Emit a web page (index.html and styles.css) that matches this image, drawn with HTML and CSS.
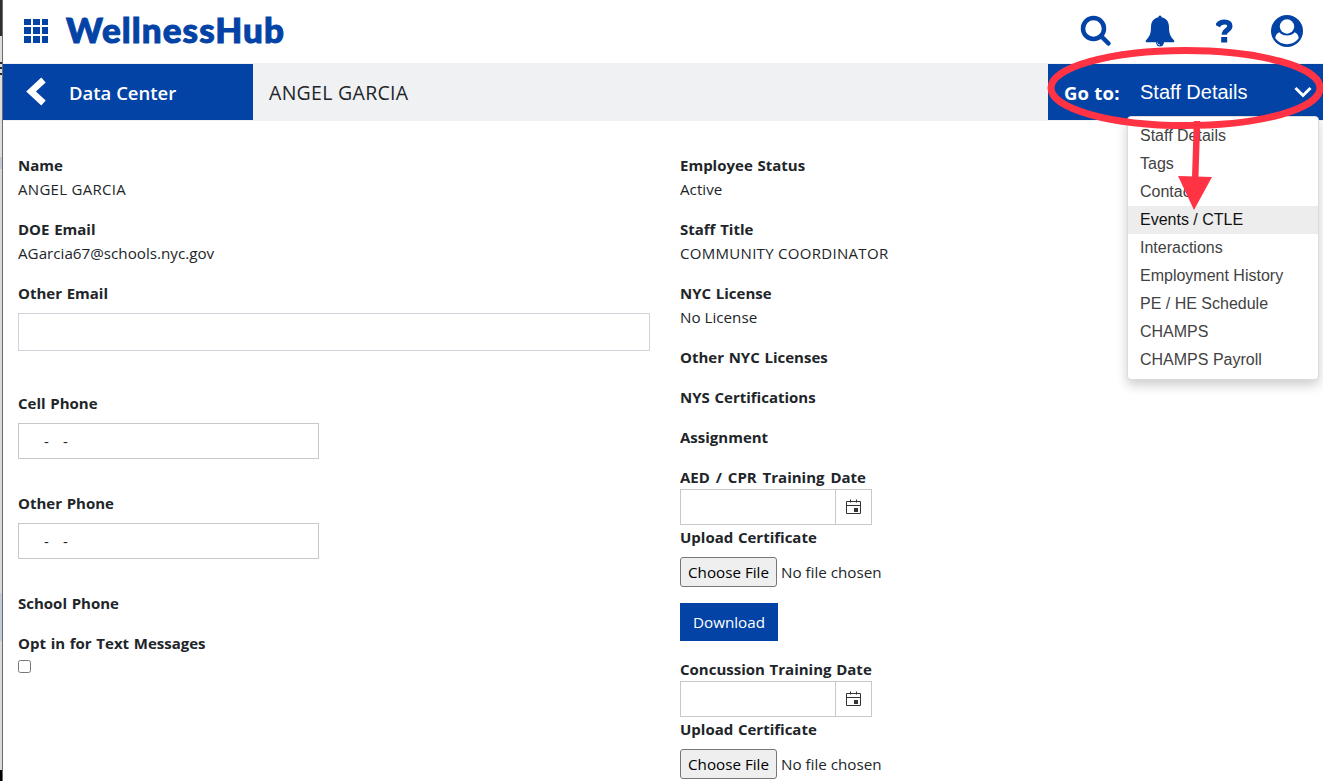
FILE: index.html
```html
<!DOCTYPE html>
<html lang="en">
<head>
    <meta charset="UTF-8">
    <meta name="viewport" content="width=device-width, initial-scale=1.0">
    <title>WellnessHub - Staff Details</title>
    <link rel="stylesheet" href="styles.css">
</head>
<body>
    <div class="edge"></div>

    <div class="page">
        <header class="topbar">
            <div class="app-grid">
                <i></i><i></i><i></i><i></i><i></i><i></i><i></i><i></i><i></i>
            </div>
            <div class="logo">WellnessHub</div>
            <div class="top-icons">
                <svg width="32" height="32" viewBox="0 0 32 32">
                    <circle cx="13.5" cy="13.5" r="10.5" fill="none" stroke="#0343a5" stroke-width="4.500"/>
                    <path d="M21.500 21.500L28.500 28.500" stroke="#0343a5" stroke-width="4.500" stroke-linecap="round"/>
                </svg>
                <svg width="30" height="32" viewBox="0 0 30 32">
                    <path d="M15 0.500c1 0 1.500 .7 1.500 1.800C21.500 3.200 24 7 24 12c0 7 1.500 9.500 5.200 13.500.5 1-.2 1.800-1.200 1.800H2c-1 0-1.700-.8-1.200-1.800C4.500 21.500 6 19 6 12c0-5 2.500-8.800 7.500-9.700 0-1.100.5-1.800 1.500-1.800z" fill="#0343a5"/>
                    <path d="M11 27a4 4.500 0 0 0 8 0z" fill="#0343a5"/>
                    <path d="M12.300 27.500c.2 1.700 1.200 2.300 2.700 2.500" fill="none" stroke="#fff" stroke-width=".8"/>
                </svg>
                <svg width="17" height="24" viewBox="0 0 17 24">
                    <path d="M1.500 7C3 4.200 5.300 3 8.300 3c3.500 0 5.600 1.300 5.600 4 0 4.300-5.700 3.800-5.700 8.700" fill="none" stroke="#0343a5" stroke-width="5.200"/>
                    <rect x="5.200" y="18" width="6" height="5.500" fill="#0343a5"/>
                </svg>
                <svg width="32" height="32" viewBox="0 0 32 32">
                    <circle cx="16" cy="16" r="16" fill="#0343a5"/>
                    <circle cx="16" cy="11.500" r="7.200" fill="#fff"/>
                    <path d="M8.300 17.300c-2.400.9-3.900 3-4 6 2.800 3.900 6.900 6 11.700 6s8.900-2.100 11.700-6c-.1-3-1.600-5.100-4-6-2 2.200-4.500 3.300-7.700 3.300s-5.700-1.100-7.700-3.300z" fill="#fff"/>
                </svg>
            </div>
        </header>

        <nav class="navbar">
            <div class="nav-back">
                <svg width="21" height="30" viewBox="0 0 21 30">
                    <path d="M17.500 3L5 14.500L17.500 26" fill="none" stroke="#fff" stroke-width="6.500"/>
                </svg>
                <span class="nav-title">Data Center</span>
            </div>
            <div class="nav-person">ANGEL GARCIA</div>
            <div class="nav-goto">
                <span class="goto-label">Go to:</span>
                <span class="goto-value">Staff Details</span>
                <svg class="goto-arrow" width="18" height="12" viewBox="0 0 18 12">
                    <path d="M1.500 2L9 9.500L16.500 2" fill="none" stroke="#fff" stroke-width="3"/>
                </svg>
                <ul class="goto-menu">
                    <li>Staff Details</li>
                    <li>Tags</li>
                    <li>Contact</li>
                    <li class="active">Events / CTLE</li>
                    <li>Interactions</li>
                    <li>Employment History</li>
                    <li>PE / HE Schedule</li>
                    <li>CHAMPS</li>
                    <li>CHAMPS Payroll</li>
                </ul>
            </div>
        </nav>

        <main class="details">
            <div class="column">
                <div class="field">
                    <label>Name</label>
                    <p class="caps">ANGEL GARCIA</p>
                </div>
                <div class="field">
                    <label>DOE Email</label>
                    <p>AGarcia67@schools.nyc.gov</p>
                </div>
                <div class="field email">
                    <label for="otherEmail">Other Email</label>
                    <input type="text" id="otherEmail">
                </div>
                <div class="field phone">
                    <label for="cellPhone">Cell Phone</label>
                    <input type="text" id="cellPhone" value="-   -">
                </div>
                <div class="field phone">
                    <label for="otherPhone">Other Phone</label>
                    <input type="text" id="otherPhone" value="-   -">
                </div>
                <div class="field">
                    <label>School Phone</label>
                </div>
                <div class="field">
                    <label for="optIn">Opt in for Text Messages</label>
                    <input type="checkbox" id="optIn">
                </div>
            </div>

            <div class="column">
                <div class="field">
                    <label>Employee Status</label>
                    <p>Active</p>
                </div>
                <div class="field">
                    <label>Staff Title</label>
                    <p class="caps">COMMUNITY COORDINATOR</p>
                </div>
                <div class="field">
                    <label>NYC License</label>
                    <p>No License</p>
                </div>
                <div class="field">
                    <label>Other NYC Licenses</label>
                </div>
                <div class="field">
                    <label>NYS Certifications</label>
                </div>
                <div class="field">
                    <label>Assignment</label>
                </div>
                <div class="training">
                    <label for="aedDate" class="aed">AED / CPR Training Date</label>
                    <div class="date-picker">
                        <input type="text" id="aedDate">
                        <button class="calendar">
                            <svg width="15" height="16" viewBox="0 0 15 16">
                                <path d="M.5 2.500h14v12H.5zM0 6.500h15M4.500 .5v3M10.500 .5v3" fill="none" stroke="#333"/>
                                <rect x="8" y="9" width="4" height="4" fill="#333"/>
                            </svg>
                        </button>
                    </div>
                    <label>Upload Certificate</label>
                    <div class="file"><button>Choose File</button><span>No file chosen</span></div>
                    <button class="download">Download</button>
                </div>
                <div class="training">
                    <label for="concussionDate">Concussion Training Date</label>
                    <div class="date-picker">
                        <input type="text" id="concussionDate">
                        <button class="calendar">
                            <svg width="15" height="16" viewBox="0 0 15 16">
                                <path d="M.5 2.500h14v12H.5zM0 6.500h15M4.500 .5v3M10.500 .5v3" fill="none" stroke="#333"/>
                                <rect x="8" y="9" width="4" height="4" fill="#333"/>
                            </svg>
                        </button>
                    </div>
                    <label>Upload Certificate</label>
                    <div class="file"><button>Choose File</button><span>No file chosen</span></div>
                </div>
            </div>
        </main>
    </div>

    <!-- red pointer drawn over the menu -->
    <svg class="pointer" width="278" height="170" viewBox="0 0 278 170">
        <ellipse cx="140.500" cy="43" rx="134.500" ry="37.500" fill="none" stroke="#ff3344" stroke-width="7"/>
        <path d="M152 76L150 140" stroke="#ff3344" stroke-width="6.500"/>
        <path d="M133 131L167 132L149 165z" fill="#ff3344"/>
    </svg>
</body>
</html>
```

FILE: styles.css
```css
* {
    box-sizing: border-box;
}

body {
    margin: 0;
    height: 781px;
    display: flex;
    overflow: hidden;
    background: #ffffff;
    font-family: 'Open Sans', 'Noto Sans', sans-serif;
    font-size: 15.2px;
    line-height: 24px;
    color: #212529;
}

/* strip of the window behind the page */
.edge {
    width: 3px;
    border-right: 1px solid #6b6b6b;
    background: linear-gradient(#2f2f2f 36px, #dedede 36px, #dedede 62px, #1c2c3c 62px, #1c2c3c 64px, #dedede 64px, #dedede 67px, #1c2c3c 67px, #1c2c3c 69px, #dedede 69px, #dedede 73px, #1c2c3c 73px, #1c2c3c 75px, #dedede 75px, #dedede 157px, #c3c9d2 157px, #c3c9d2 169px, #dadada 169px, #dadada 593px, #c3cbd8 593px, #c3cbd8 641px, #dadada 641px, #dadada 770px, #000 770px);
}

.page {
    width: 1320px;
}

.topbar {
    height: 63px;
    display: flex;
    align-items: center;
    padding: 0 20px 2px 21px;
}

.app-grid {
    display: grid;
    grid-template-columns: 7px 7px 6px;
    grid-template-rows: 6px 7px 7px;
    gap: 2px;
}

.app-grid i {
    background: #0343a5;
}

.logo {
    margin-left: 18px;
    padding-bottom: 4px;
    font-family: Lato, sans-serif;
    font-weight: 900;
    font-size: 35px;
    letter-spacing: 1.1px;
    color: #0343a5;
    -webkit-text-stroke: 1px #0343a5;
}

.top-icons {
    margin-left: auto;
    display: flex;
    align-items: center;
}

.top-icons svg:nth-child(2) {
    margin-left: 33px;
}

.top-icons svg:nth-child(3) {
    margin-left: 41px;
}

.top-icons svg:nth-child(4) {
    margin-left: 38px;
}

.navbar {
    height: 58px;
    display: flex;
    padding: 1px 0;
    background: #f0f1f3;
}

.nav-back {
    width: 250px;
    display: flex;
    align-items: center;
    padding: 0 0 1px 23px;
    background: #0343a5;
    color: #ffffff;
}

.nav-title {
    margin: 3px 0 0 22px;
    font-size: 18.5px;
    font-weight: 600;
}

.nav-person {
    flex: 1;
    padding: 17px 16px;
    font-size: 19.5px;
    font-weight: 500;
    letter-spacing: 0.3px;
}

.nav-goto {
    position: relative;
    width: 275px;
    display: flex;
    align-items: center;
    padding: 0 11px 0 16px;
    background: #0343a5;
    color: #ffffff;
}

.goto-label {
    width: 76px;
    padding-top: 1px;
    font-size: 18.5px;
    font-weight: 700;
    letter-spacing: 0.2px;
}

.goto-value {
    font-family: 'Liberation Sans', sans-serif;
    font-size: 20px;
}

.goto-arrow {
    margin-left: auto;
}

.goto-menu {
    position: absolute;
    top: 52px;
    right: 4px;
    width: 192px;
    margin: 0;
    padding: 5px 0;
    list-style: none;
    background: #ffffff;
    border: 1px solid #dcdcdc;
    border-radius: 4px;
    box-shadow: 0 5px 12px rgba(0, 0, 0, 0.2);
    font-family: 'Liberation Sans', sans-serif;
    font-size: 16px;
    line-height: 28px;
    color: #424242;
}

.goto-menu li {
    padding-left: 12px;
}

.goto-menu .active {
    background: #ededed;
    color: #111111;
}

.details {
    display: flex;
    gap: 30px;
    padding: 33px 15px 0;
}

.column {
    width: 632px;
}

.field {
    margin-bottom: 16px;
}

label,
.field p {
    display: block;
    margin: 0;
    padding-bottom: 2px;
    line-height: 22px;
}

label {
    font-weight: 700;
    font-size: 15px;
    word-spacing: 0.8px;
}

.aed {
    word-spacing: 2px;
}

.field .caps {
    font-size: 15px;
    letter-spacing: 0.3px;
}

.field input[type="text"] {
    display: block;
    height: 36px;
    margin-top: 7px;
    border: 1px solid #c8c8c8;
    font-family: inherit;
    font-size: 15px;
    color: #212529;
    outline: none;
}

.email input[type="text"] {
    width: 632px;
    height: 38px;
    border-color: #ced4da;
}

.email {
    margin-bottom: 41px;
}

.phone {
    margin-bottom: 33px;
}

.phone input[type="text"] {
    width: 301px;
    padding: 0 25px;
    word-spacing: 0.8px;
}

input[type="checkbox"] {
    display: block;
    width: 13px;
    height: 13px;
    margin: 4px 0 0;
}

.training {
    margin-bottom: 17px;
}

.date-picker {
    display: flex;
    width: 192px;
    height: 36px;
    margin: -1px 0 1px;
    border: 1px solid #c8c8c8;
}

.date-picker input {
    width: 154px;
    border: none;
    outline: none;
}

.calendar {
    width: 36px;
    padding: 0 1px 0 0;
    border: none;
    border-left: 1px solid #c8c8c8;
    background: #ffffff;
    display: flex;
    align-items: center;
    justify-content: center;
}

.file {
    display: flex;
    align-items: center;
    gap: 4px;
    margin-top: 7px;
}

.file button {
    width: 97px;
    height: 30px;
    padding: 0;
    border: 1px solid #767676;
    border-radius: 3px;
    background: #efefef;
    font-family: inherit;
    font-size: 15.2px;
    color: #000000;
}

.download {
    display: block;
    width: 98px;
    height: 38px;
    margin-top: 16px;
    padding: 0;
    border: none;
    background: #0343a5;
    color: #ffffff;
    font-family: inherit;
    font-size: 15.2px;
}

.pointer {
    position: absolute;
    left: 1045px;
    top: 45px;
}
```
